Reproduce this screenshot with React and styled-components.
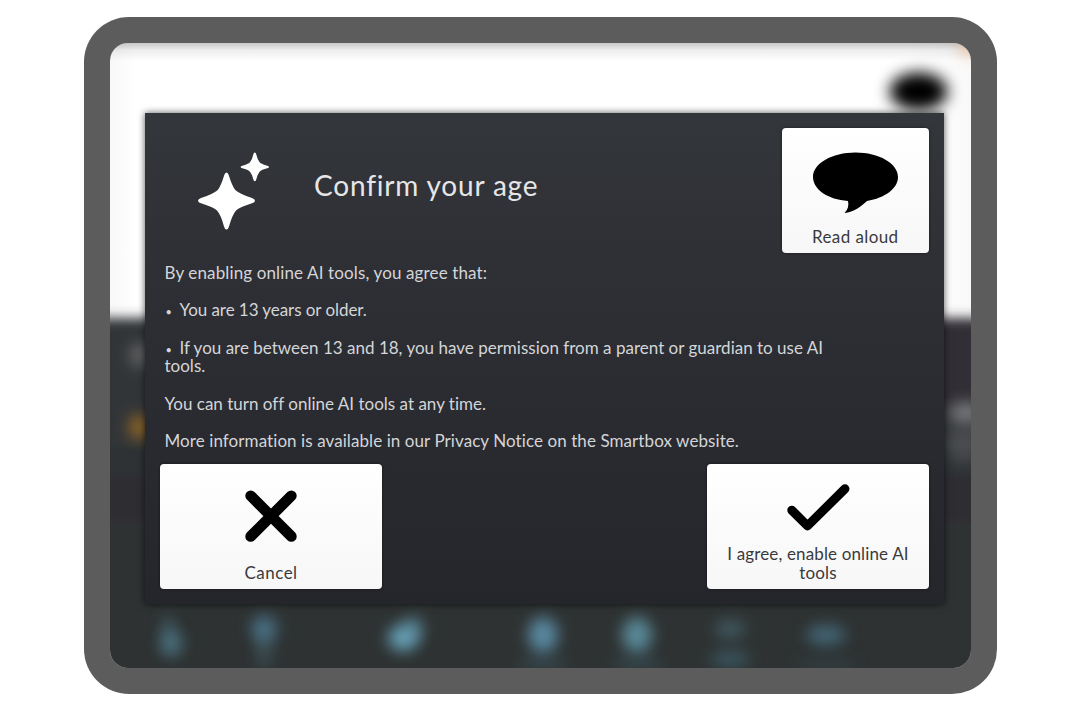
import React from "react";
import styled, { createGlobalStyle } from "styled-components";

const GlobalStyle = createGlobalStyle`
  * {
    box-sizing: border-box;
  }

  body {
    margin: 0;
    background: #fff;
    font-family: Lato, "Open Sans", sans-serif;
  }
`;

const Page = styled.main`
  height: 720px;
  padding: 16.5px 83.5px 26px 84px;
  overflow: hidden;
`;

const Tablet = styled.div`
  height: 677.5px;
  border-radius: 45px;
  padding: 26px;
  background: #5c5c5c;
`;

const Screen = styled.div`
  position: relative;
  height: 100%;
  padding: 70.5px 26.5px 0 35px;
  border-radius: 18px;
  overflow: hidden;
`;

// the blurred app behind the dialog
const Backdrop = styled.svg`
  position: absolute;
  inset: 0;
  width: 100%;
  height: 100%;
`;

const Dialog = styled.section`
  position: relative;
  display: flex;
  flex-direction: column;
  height: 490.5px;
  padding: 15px;
  background: linear-gradient(#33363b, #2e2f34 35%, #25262b);
  box-shadow: 0 0 7px rgba(0, 0, 0, 0.65);
`;

const Header = styled.header`
  display: flex;
  flex: none;
  align-items: flex-start;
  height: 135px;
`;

const Sparkles = styled.svg`
  flex: none;
  width: 72px;
  height: 78px;
  margin: 24px 44px 0 38px;
  fill: #fff;
`;

const Title = styled.h1`
  flex: 1;
  margin: 40px 0 0;
  color: #e6e6e9;
  font-size: 28px;
  font-weight: 400;
  line-height: 34px;
  letter-spacing: 0.82px;
`;

const Cell = styled.button`
  display: flex;
  flex-direction: column;
  align-items: center;
  justify-content: flex-end;
  width: ${(props) => props.$width}px;
  height: 124.5px;
  padding: 0 0 6px;
  border: 0;
  border-radius: 4px;
  background: linear-gradient(#fff, #f7f7f8);
  box-shadow: 0 0 3px rgba(0, 0, 0, 0.5);
  color: #3a3a3d;
`;

const CellIcon = styled.svg`
  flex: none;
  width: 90px;
  height: 64px;
  margin-bottom: ${(props) => props.$gap}px;
  overflow: visible;
`;

const CellLabel = styled.div`
  max-width: 200px;
  font: 400 17px/18.6px Lato, "Open Sans", sans-serif;
  letter-spacing: ${(props) => props.$spacing}px;
  text-align: center;
`;

const Terms = styled.div`
  flex: 1;
  padding: 1px 0 0 4.5px;
  color: #d4d5d8;
  font-size: 17px;
  line-height: 18.65px;
`;

const Line = styled.p`
  width: 672px;
  margin: 0 0 18.65px;
  letter-spacing: ${(props) => props.$spacing}px;

  &:last-child {
    margin-bottom: 0;
  }
`;

const Bullet = styled.span`
  display: inline-block;
  width: 15px;
  padding-left: 1px;
  font-size: 11px;
  line-height: 1;
`;

const Actions = styled.footer`
  display: flex;
  flex: none;
  justify-content: space-between;
`;

const blobs = [
  { x: 61, y: 600, rx: 11, ry: 14, color: "#5b93a8", opacity: 0.65 },
  { x: 58, y: 582, rx: 6, ry: 12, color: "#5b93a8", opacity: 0.35 },
  { x: 154, y: 586, rx: 13, ry: 14, color: "#5489a5", opacity: 0.7 },
  { x: 154, y: 608, rx: 7, ry: 18, color: "#54808e", opacity: 0.4 },
  { x: 293, y: 595, rx: 15, ry: 13, color: "#70b2cc", opacity: 0.85 },
  { x: 303, y: 585, rx: 10, ry: 12, color: "#70b2cc", opacity: 0.5 },
  { x: 433, y: 592, rx: 15, ry: 18, color: "#6098b4", opacity: 0.85 },
  { x: 527, y: 592, rx: 15, ry: 18, color: "#5e92a3", opacity: 0.9 },
  { x: 620, y: 586, rx: 15, ry: 9, color: "#4e7785", opacity: 0.6 },
  { x: 620, y: 616, rx: 20, ry: 9, color: "#426b7c", opacity: 0.6 },
  { x: 716, y: 592, rx: 20, ry: 10, color: "#487184", opacity: 0.85 },
  { x: 433, y: 621, rx: 26, ry: 7, color: "#426b7c", opacity: 0.35 },
  { x: 527, y: 621, rx: 26, ry: 7, color: "#426b7c", opacity: 0.35 },
  { x: 716, y: 621, rx: 32, ry: 6, color: "#426b7c", opacity: 0.25 },
  { x: 30, y: 312, rx: 10, ry: 12, color: "#888", opacity: 0.6 },
  { x: 30, y: 384, rx: 11, ry: 12, color: "#b57920", opacity: 0.75 },
  { x: 856, y: 370, rx: 17, ry: 11, color: "#8f9093", opacity: 0.75 },
  { x: 854, y: 402, rx: 18, ry: 18, color: "#5c5c60", opacity: 0.6 },
];

const BlurredApp = () => (
  <Backdrop viewBox="0 0 860.5 625.5" preserveAspectRatio="none">
    <defs>
      <filter
        id="soft"
        x="-150%"
        y="-150%"
        width="400%"
        height="400%"
        colorInterpolationFilters="sRGB"
      >
        <feGaussianBlur stdDeviation="7.5" />
      </filter>
      <filter id="horizon" x="-10%" y="-10%" width="120%" height="120%">
        <feGaussianBlur stdDeviation="6" />
      </filter>
      <linearGradient id="edge" x2="0" y2="1">
        <stop offset="0" stopColor="#000" stopOpacity="0.22" />
        <stop offset="0.4" stopColor="#000" stopOpacity="0.07" />
        <stop offset="1" stopColor="#000" stopOpacity="0" />
      </linearGradient>
      <linearGradient id="sheet">
        <stop offset="0" stopColor="#f8f8f8" />
        <stop offset="0.03" stopColor="#fff" />
        <stop offset="0.93" stopColor="#fff" />
        <stop offset="1" stopColor="#f9f9f9" />
      </linearGradient>
      <linearGradient id="grid" x2="0" y2="1">
        <stop offset="0" stopColor="#303437" />
        <stop offset="0.3" stopColor="#303537" />
        <stop offset="0.42" stopColor="#2d2e33" />
        <stop offset="0.6" stopColor="#2d3132" />
        <stop offset="1" stopColor="#2e3434" />
      </linearGradient>
    </defs>
    <rect width="861" height="626" fill="url(#sheet)" />
    <g filter="url(#horizon)">
      <rect x="-40" y="275" width="941" height="400" fill="url(#grid)" />
      <rect x="825" y="275" width="80" height="85" fill="#302f36" />
    </g>
    <rect width="861" height="18" fill="url(#edge)" />
    <ellipse cx="808.5" cy="48.5" rx="29" ry="19" fill="#000" filter="url(#soft)" />
    <circle cx="860" cy="3" r="10" fill="#eaa976" opacity="0.7" filter="url(#soft)" />
    {blobs.map((b, i) => (
      <ellipse
        key={i}
        cx={b.x}
        cy={b.y}
        rx={b.rx}
        ry={b.ry}
        fill={b.color}
        opacity={b.opacity}
        filter="url(#soft)"
      />
    ))}
  </Backdrop>
);

const App = () => {
  return (
    <>
      <GlobalStyle />
      <Page>
        <Tablet>
          <Screen>
            <BlurredApp />
            <Dialog>
              <Header>
                <Sparkles viewBox="0 0 72 78">
                  <path d="M28.5 20.5Q30 20.5 30.7 23Q34 34 37.5 38.3Q41.5 42 54 46Q57 47 57 48.7Q57 50.4 54 51.2Q41.5 55 38 58.5Q34.2 63 31 74.5Q30.2 77.5 28.5 77.5Q26.8 77.5 26 74.5Q23 63 19 58.5Q15.5 55 3 51.2Q0 50.4 0 48.7Q0 47 3 46Q15.5 42 19.5 38.3Q23 34 26.3 23Q27 20.5 28.5 20.5Z" />
                  <path d="M56.8 .5Q57.9 .5 58.3 2.5Q59.6 8 61.6 10.3Q63.5 12.2 69.3 13.7Q71 14.1 71 15Q71 15.9 69.3 16.3Q63.5 17.8 61.6 19.7Q59.6 22 58.3 27.3Q57.9 29.3 56.8 29.3Q55.7 29.3 55.3 27.3Q54 22 52 19.7Q50.1 17.8 44.3 16.3Q42.6 15.9 42.6 15Q42.6 14.1 44.3 13.7Q50.1 12.2 52 10.3Q54 8 55.3 2.5Q55.7 .5 56.8 .5Z" />
                </Sparkles>
                <Title>Confirm your age</Title>
                <Cell $width={147.5}>
                  <CellIcon $gap={14} viewBox="0 0 90 64">
                    <path d="M45.5 2.5C69 2.5 88 13.5 88 27C88 38.5 75 48 57 51C51 56.5 44 62 34.5 63C38 59.5 39 55.5 38 51C18 49.5 3 39.5 3 27C3 13.5 22 2.5 45.5 2.5Z" />
                  </CellIcon>
                  <CellLabel $spacing={0.4}>Read aloud</CellLabel>
                </Cell>
              </Header>
              <Terms>
                <Line $spacing={0.13}>By enabling online AI tools, you agree that:</Line>
                <Line $spacing={-0.06}>
                  <Bullet>•</Bullet>You are 13 years or older.
                </Line>
                <Line $spacing={0.01}>
                  <Bullet>•</Bullet>If you are between 13 and 18, you have permission from a parent
                  or guardian to use AI tools.
                </Line>
                <Line $spacing={0.01}>You can turn off online AI tools at any time.</Line>
                <Line $spacing={0.08}>
                  More information is available in our Privacy Notice on the Smartbox website.
                </Line>
              </Terms>
              <Actions>
                <Cell $width={222}>
                  <CellIcon $gap={16.5} viewBox="0 0 90 64">
                    <path
                      d="M24.7 12.8L65.3 53.4M65.3 12.8L24.7 53.4"
                      stroke="#000"
                      strokeWidth="10.8"
                      strokeLinecap="round"
                    />
                  </CellIcon>
                  <CellLabel $spacing={0.5}>Cancel</CellLabel>
                </Cell>
                <Cell $width={222}>
                  <CellIcon $gap={0.5} viewBox="0 0 90 64">
                    <path
                      d="M18.8 29.2L34.5 44.9L72 7.8"
                      fill="none"
                      stroke="#000"
                      strokeWidth="9"
                      strokeLinecap="round"
                      strokeLinejoin="round"
                    />
                  </CellIcon>
                  <CellLabel $spacing={0.14}>I agree, enable online AI tools</CellLabel>
                </Cell>
              </Actions>
            </Dialog>
          </Screen>
        </Tablet>
      </Page>
    </>
  );
};

export default App;
